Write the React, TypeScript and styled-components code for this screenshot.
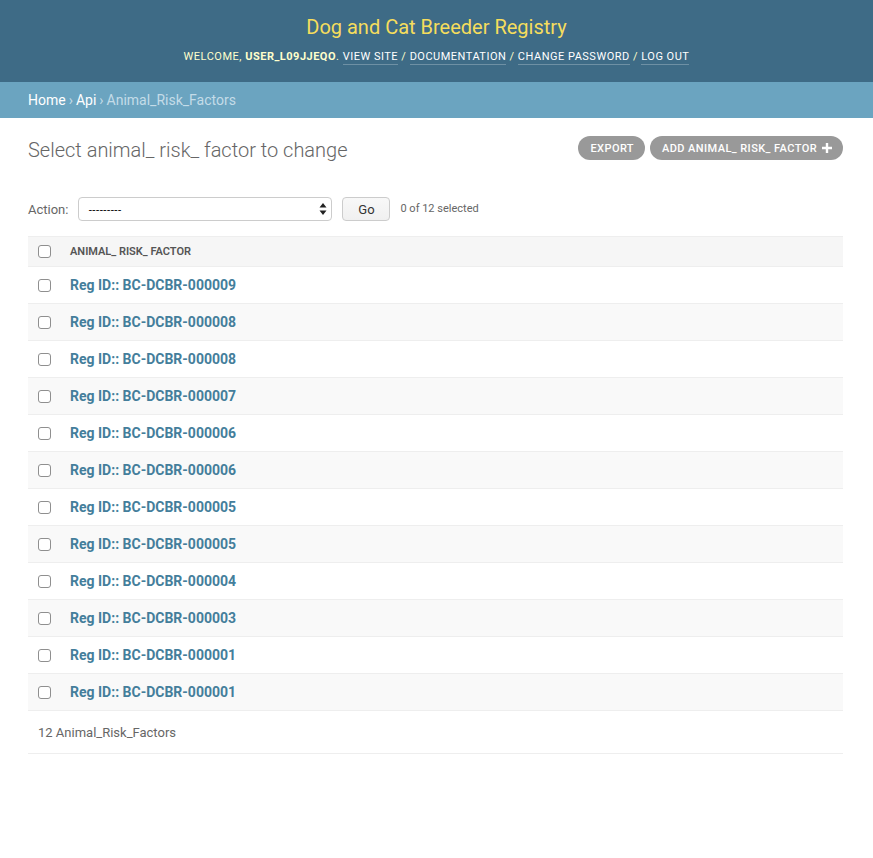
import React from "react";
import styled, { createGlobalStyle } from "styled-components";

const GlobalStyle = createGlobalStyle`
  html, body { margin: 0; padding: 0; background: #fff; }
  body {
    font-family: Roboto, "Lucida Grande", "DejaVu Sans", Verdana, Arial, sans-serif;
    color: #333;
    font-size: 14px;
  }
  * { box-sizing: border-box; }
`;

const Header = styled.header`
  background: #3e6b86;
  height: 82px;
  display: flex;
  flex-direction: column;
  align-items: center;
  padding-top: 14px;
`;

const Branding = styled.h1`
  margin: 0;
  font-size: 20px;
  line-height: 26px;
  font-weight: 400;
  color: #f5dd5d;
`;

const UserTools = styled.div`
  margin-top: 9px;
  font-size: 11px;
  line-height: 16px;
  letter-spacing: 0.5px;
  text-transform: uppercase;
  color: #ffc;
  white-space: nowrap;
`;

const UserName = styled.strong`
  font-weight: 700;
`;

const ToolLink = styled.a`
  color: #fff;
  text-decoration: none;
  border-bottom: 1px solid rgba(255, 255, 255, 0.25);
  padding-bottom: 1px;
`;

const Breadcrumbs = styled.nav`
  background: #6ba4c0;
  height: 36px;
  display: flex;
  align-items: center;
  padding: 0 28px;
  font-size: 14px;
  color: #c4dce8;
`;

const Crumb = styled.a`
  color: #fff;
  text-decoration: none;
`;

const Sep = styled.span`
  margin: 0 3px;
`;

const Content = styled.main`
  padding: 18px 30px 0 28px;
`;

const TitleRow = styled.div`
  display: flex;
  justify-content: space-between;
  align-items: flex-start;
  height: 61px;
`;

const Title = styled.h1`
  margin: 0;
  padding-top: 1px;
  font-size: 20px;
  line-height: 26px;
  font-weight: 300;
  color: #666;
`;

const ObjectTools = styled.div`
  display: flex;
  gap: 5px;
`;

const ToolButton = styled.a`
  display: inline-flex;
  align-items: center;
  gap: 5px;
  height: 24px;
  padding: 0 11px 0 12px;
  border-radius: 15px;
  background: #999;
  color: #fff;
  font-size: 11px;
  font-weight: 500;
  letter-spacing: 0.42px;
  text-transform: uppercase;
  text-decoration: none;
  white-space: nowrap;
`;

const Actions = styled.div`
  display: flex;
  align-items: center;
  height: 24px;
  margin-bottom: 15px;
  font-size: 13px;
  color: #666;
`;

const ActionLabel = styled.label`
  margin-right: 10px;
`;

const FakeSelect = styled.div`
  width: 254px;
  height: 24px;
  border: 1px solid #ccc;
  border-radius: 4px;
  background: #fff;
  display: flex;
  align-items: center;
  justify-content: space-between;
  padding: 0 4px 0 9px;
  color: #000;
  font-size: 11px;
  font-family: "Liberation Sans", Arial, sans-serif;
`;

const GoButton = styled.button`
  margin-left: 10px;
  width: 48px;
  height: 24px;
  border: 1px solid #ccc;
  border-radius: 4px;
  background: linear-gradient(#f8f8f8, #f0f0f0);
  color: #333;
  font-family: Roboto, sans-serif;
  font-size: 13px;
  padding: 0;
`;

const Counter = styled.span`
  margin-left: 10px;
  font-size: 11px;
  color: #666;
  margin-top: -1px;
`;

const Table = styled.table`
  width: 100%;
  border-collapse: collapse;
`;

const HeadRow = styled.tr`
  background: #f6f6f6;
  border-top: 1px solid #eee;
  border-bottom: 1px solid #eee;
`;

const CheckCell = styled.td`
  width: 42px;
  padding: 0 0 0 10px;
  vertical-align: middle;
`;

const HeadCell = styled.th`
  text-align: left;
  padding: 0;
  height: 30px;
  font-size: 11px;
  font-weight: 600;
  color: #555;
  text-transform: uppercase;
  vertical-align: middle;
`;

const Row = styled.tr<{ $alt: boolean }>`
  background: ${(p) => (p.$alt ? "#f9f9f9" : "#fff")};
  border-bottom: 1px solid #eee;
`;

const NameCell = styled.th`
  text-align: left;
  height: 37px;
  padding: 0;
  vertical-align: middle;
`;

const RowLink = styled.a`
  color: #447e9b;
  font-size: 14px;
  font-weight: 700;
  text-decoration: none;
`;

const Box = styled.span`
  display: block;
  width: 13px;
  height: 13px;
  border: 1px solid #8f8f8f;
  border-radius: 3px;
  background: #fff;
`;

const Paginator = styled.p`
  margin: 0;
  height: 43px;
  display: flex;
  align-items: center;
  padding-left: 10px;
  font-size: 13px;
  color: #666;
  border-bottom: 1px solid #eee;
`;

const ids = [
  "000009",
  "000008",
  "000008",
  "000007",
  "000006",
  "000006",
  "000005",
  "000005",
  "000004",
  "000003",
  "000001",
  "000001",
];

const Plus = () => (
  <svg width="10" height="10" viewBox="0 0 10 10">
    <path d="M3.8 0h2.4v3.8H10v2.4H6.2V10H3.8V6.2H0V3.8h3.8z" fill="#fff" />
  </svg>
);

const Arrows = () => (
  <svg width="8" height="12" viewBox="0 0 8 12">
    <path d="M4 0L7.5 4.5H0.5z M4 12L0.5 7.5H7.5z" fill="#222" />
  </svg>
);

export default function App() {
  return (
    <>
      <GlobalStyle />
      <Header>
        <Branding>Dog and Cat Breeder Registry</Branding>
        <UserTools>
          Welcome, <UserName>user_l09jjeqo</UserName>.{" "}
          <ToolLink href="#">View site</ToolLink> /{" "}
          <ToolLink href="#">Documentation</ToolLink> /{" "}
          <ToolLink href="#">Change password</ToolLink> /{" "}
          <ToolLink href="#">Log out</ToolLink>
        </UserTools>
      </Header>
      <Breadcrumbs>
        <Crumb href="#">Home</Crumb>
        <Sep>›</Sep>
        <Crumb href="#">Api</Crumb>
        <Sep>›</Sep>
        <span>Animal_Risk_Factors</span>
      </Breadcrumbs>
      <Content>
        <TitleRow>
          <Title>Select animal_ risk_ factor to change</Title>
          <ObjectTools>
            <ToolButton href="#">Export</ToolButton>
            <ToolButton href="#">
              Add animal_ risk_ factor <Plus />
            </ToolButton>
          </ObjectTools>
        </TitleRow>
        <Actions>
          <ActionLabel>Action:</ActionLabel>
          <FakeSelect>
            <span>---------</span>
            <Arrows />
          </FakeSelect>
          <GoButton>Go</GoButton>
          <Counter>0 of 12 selected</Counter>
        </Actions>
        <Table>
          <thead>
            <HeadRow>
              <CheckCell>
                <Box />
              </CheckCell>
              <HeadCell>Animal_ risk_ factor</HeadCell>
            </HeadRow>
          </thead>
          <tbody>
            {ids.map((id, i) => (
              <Row key={i} $alt={i % 2 === 1}>
                <CheckCell>
                  <Box />
                </CheckCell>
                <NameCell>
                  <RowLink href="#">Reg ID:: BC-DCBR-{id}</RowLink>
                </NameCell>
              </Row>
            ))}
          </tbody>
        </Table>
        <Paginator>12 Animal_Risk_Factors</Paginator>
      </Content>
    </>
  );
}
